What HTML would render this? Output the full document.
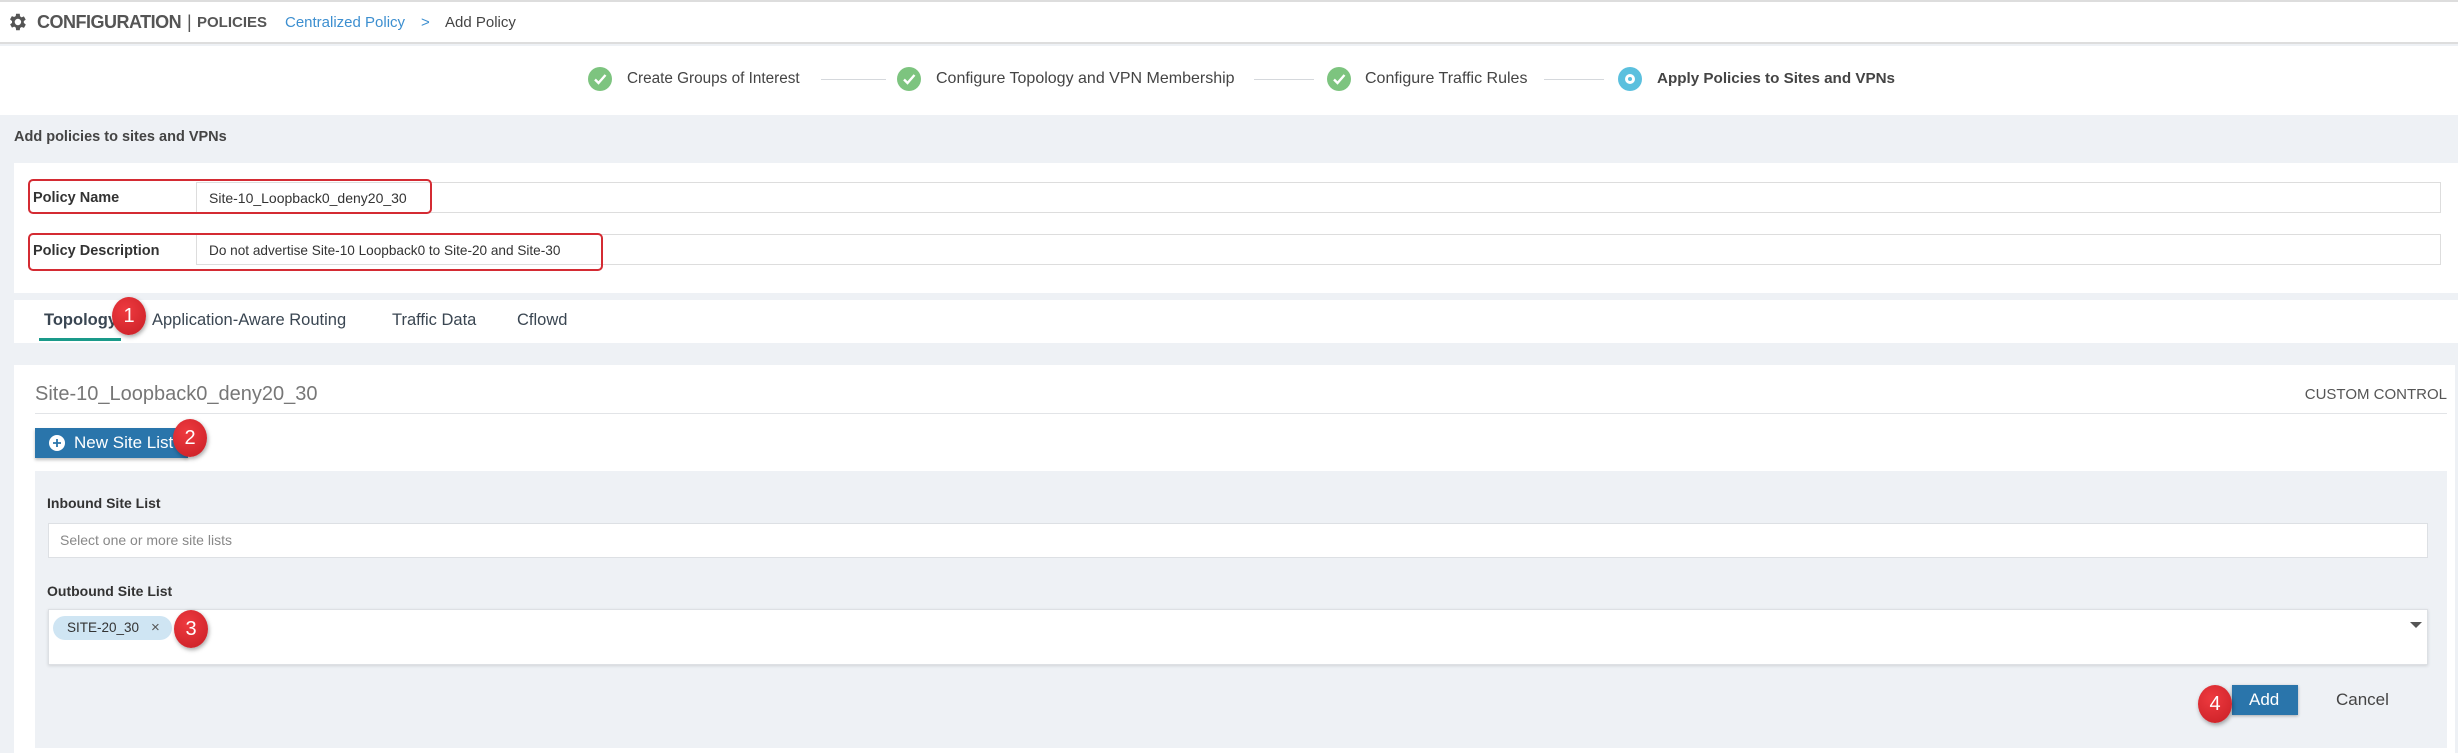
<!DOCTYPE html>
<html><head><meta charset="utf-8"><style>
*{box-sizing:border-box;margin:0;padding:0}
body{width:2458px;height:753px;overflow:hidden;background:#eef1f5;font-family:"Liberation Sans",Arial,sans-serif;position:relative;color:#333}
.a{position:absolute;white-space:nowrap}
.badge{position:absolute;width:34px;height:38px;border-radius:50%;background:radial-gradient(circle at 40% 35%,#ee3a3f,#c81e25);color:#fff;font-size:20px;text-align:center;line-height:38px;box-shadow:1px 2px 4px rgba(0,0,0,.35)}
.chk{position:absolute;width:24px;height:24px;border-radius:50%;background:#7dc47f}
.line{position:absolute;height:1px;background:#d5d8dc;top:79px}
</style></head><body>
<div class="a" style="left:0;top:0;width:2458px;height:44px;background:#fff;border-top:2px solid #ddd;border-bottom:2px solid #ddd"></div>
<svg class="a" style="left:6px;top:11px" width="22" height="22" viewBox="0 0 24 24"><path fill="#555" d="M19.4 13a7.5 7.5 0 0 0 0-2l2.1-1.6-2-3.5-2.5 1a7.5 7.5 0 0 0-1.7-1L15 3h-4l-.4 2.6a7.5 7.5 0 0 0-1.7 1l-2.5-1-2 3.5L6.6 11a7.5 7.5 0 0 0 0 2l-2.1 1.6 2 3.5 2.5-1a7.5 7.5 0 0 0 1.7 1L11 21h4l.4-2.6a7.5 7.5 0 0 0 1.7-1l2.5 1 2-3.5zM13 15.5a3.5 3.5 0 1 1 0-7 3.5 3.5 0 0 1 0 7z"/></svg>
<div class="a" style="left:37px;top:12px;font-size:18px;font-weight:bold;color:#555;letter-spacing:-0.5px">CONFIGURATION</div>
<div class="a" style="left:187px;top:12px;font-size:18px;color:#555">|</div>
<div class="a" style="left:197px;top:14px;font-size:15px;font-weight:bold;color:#555">POLICIES</div>
<div class="a" style="left:285px;top:14px;font-size:15px;color:#3d8fd0">Centralized Policy</div>
<div class="a" style="left:421px;top:14px;font-size:15px;color:#3d8fd0">&gt;</div>
<div class="a" style="left:445px;top:14px;font-size:15px;color:#444">Add Policy</div>
<div class="a" style="left:0;top:46px;width:2458px;height:69px;background:#fff"></div>
<div class="chk" style="left:588px;top:67px"></div><svg class="a" style="left:588px;top:67px" width="24" height="24"><path d="M7 12.5l3.5 3.5 7-8" stroke="#fff" stroke-width="2.4" fill="none"/></svg>
<div class="a" style="left:627px;top:70px;font-size:15.3px;color:#444">Create Groups of Interest</div>
<div class="line" style="left:821px;width:65px"></div>
<div class="chk" style="left:897px;top:67px"></div><svg class="a" style="left:897px;top:67px" width="24" height="24"><path d="M7 12.5l3.5 3.5 7-8" stroke="#fff" stroke-width="2.4" fill="none"/></svg>
<div class="a" style="left:936px;top:70px;font-size:16px;color:#444">Configure Topology and VPN Membership</div>
<div class="line" style="left:1254px;width:60px"></div>
<div class="chk" style="left:1327px;top:67px"></div><svg class="a" style="left:1327px;top:67px" width="24" height="24"><path d="M7 12.5l3.5 3.5 7-8" stroke="#fff" stroke-width="2.4" fill="none"/></svg>
<div class="a" style="left:1365px;top:70px;font-size:16px;color:#444">Configure Traffic Rules</div>
<div class="line" style="left:1544px;width:60px"></div>
<div class="a" style="left:1618px;top:67px;width:24px;height:24px;border-radius:50%;background:#5bc0de"></div>
<div class="a" style="left:1625px;top:74px;width:10px;height:10px;border-radius:50%;background:#fff"></div>
<div class="a" style="left:1628px;top:77px;width:4px;height:4px;border-radius:50%;background:#5bc0de"></div>
<div class="a" style="left:1657px;top:70px;font-size:15.2px;font-weight:bold;color:#444">Apply Policies to Sites and VPNs</div>
<div class="a" style="left:14px;top:129px;font-size:14.5px;font-weight:bold;color:#444">Add policies to sites and VPNs</div>
<div class="a" style="left:14px;top:163px;width:2444px;height:130px;background:#fff"></div>
<div class="a" style="left:196px;top:182px;width:2245px;height:31px;border:1px solid #ddd;background:#fff"></div>
<div class="a" style="left:196px;top:234px;width:2245px;height:31px;border:1px solid #ddd;background:#fff"></div>
<div class="a" style="left:28px;top:179px;width:404px;height:35px;border:2px solid #d42b33;border-radius:5px"></div>
<div class="a" style="left:28px;top:233px;width:575px;height:38px;border:2px solid #d42b33;border-radius:5px"></div>
<div class="a" style="left:33px;top:190px;font-size:14.5px;font-weight:bold;color:#333">Policy Name</div>
<div class="a" style="left:209px;top:190px;font-size:14px;color:#333">Site-10_Loopback0_deny20_30</div>
<div class="a" style="left:33px;top:243px;font-size:14.5px;font-weight:bold;color:#333">Policy Description</div>
<div class="a" style="left:209px;top:243px;font-size:13.6px;color:#333">Do not advertise Site-10 Loopback0 to Site-20 and Site-30</div>
<div class="a" style="left:14px;top:300px;width:2444px;height:43px;background:#fff"></div>
<div class="a" style="left:44px;top:311px;font-size:16.5px;font-weight:bold;color:#3a4652">Topology</div>
<div class="a" style="left:39px;top:338px;width:82px;height:3px;background:#1a9a8a"></div>
<div class="a" style="left:152px;top:311px;font-size:16.5px;color:#3a4652">Application-Aware Routing</div>
<div class="a" style="left:392px;top:311px;font-size:16.5px;color:#3a4652">Traffic Data</div>
<div class="a" style="left:517px;top:311px;font-size:16.5px;color:#3a4652">Cflowd</div>
<div class="badge" style="left:112px;top:297px">1</div>
<div class="a" style="left:14px;top:365px;width:2441px;height:388px;background:#fff"></div>
<div class="a" style="left:35px;top:383px;font-size:20px;color:#777">Site-10_Loopback0_deny20_30</div>
<div class="a" style="right:11px;top:386px;font-size:15px;color:#555">CUSTOM CONTROL</div>
<div class="a" style="left:35px;top:413px;width:2412px;height:1px;background:#e2e4e7"></div>
<div class="a" style="left:35px;top:428px;width:153px;height:30px;background:#2a75ab;box-shadow:0 2px 3px rgba(0,0,0,.25)"></div>
<svg class="a" style="left:49px;top:435px" width="16" height="16" viewBox="0 0 16 16"><circle cx="8" cy="8" r="8" fill="#fff"/><path d="M8 4v8M4 8h8" stroke="#2a75ab" stroke-width="1.8"/></svg>
<div class="a" style="left:74px;top:433px;font-size:17px;color:#fff">New Site List</div>
<div class="badge" style="left:173px;top:419px">2</div>
<div class="a" style="left:35px;top:471px;width:2412px;height:277px;background:#eef1f5"></div>
<div class="a" style="left:47px;top:495px;font-size:14px;font-weight:bold;color:#333">Inbound Site List</div>
<div class="a" style="left:48px;top:523px;width:2380px;height:35px;background:#fff;border:1px solid #dde0e4"></div>
<div class="a" style="left:60px;top:532px;font-size:14px;color:#888">Select one or more site lists</div>
<div class="a" style="left:47px;top:583px;font-size:14px;font-weight:bold;color:#333">Outbound Site List</div>
<div class="a" style="left:48px;top:609px;width:2380px;height:56px;background:#fff;border:1px solid #dde0e4;box-shadow:0 1px 3px rgba(0,0,0,.12)"></div>
<div class="a" style="left:53px;top:616px;width:119px;height:24px;background:#cfe5f3;border-radius:12px"></div>
<div class="a" style="left:67px;top:620px;font-size:13.5px;color:#333">SITE-20_30</div>
<div class="a" style="left:151px;top:619px;font-size:15px;color:#555">×</div>
<div class="badge" style="left:174px;top:610px">3</div>
<svg class="a" style="left:2410px;top:622px" width="12" height="7"><path d="M0 0h12L6 6z" fill="#555"/></svg>
<div class="a" style="left:2232px;top:685px;width:66px;height:30px;background:#2a75ab;box-shadow:0 1px 3px rgba(0,0,0,.3)"></div>
<div class="a" style="left:2249px;top:690px;font-size:17px;color:#fff">Add</div>
<div class="badge" style="left:2198px;top:685px">4</div>
<div class="a" style="left:2336px;top:690px;font-size:17px;color:#444">Cancel</div>
</body></html>
